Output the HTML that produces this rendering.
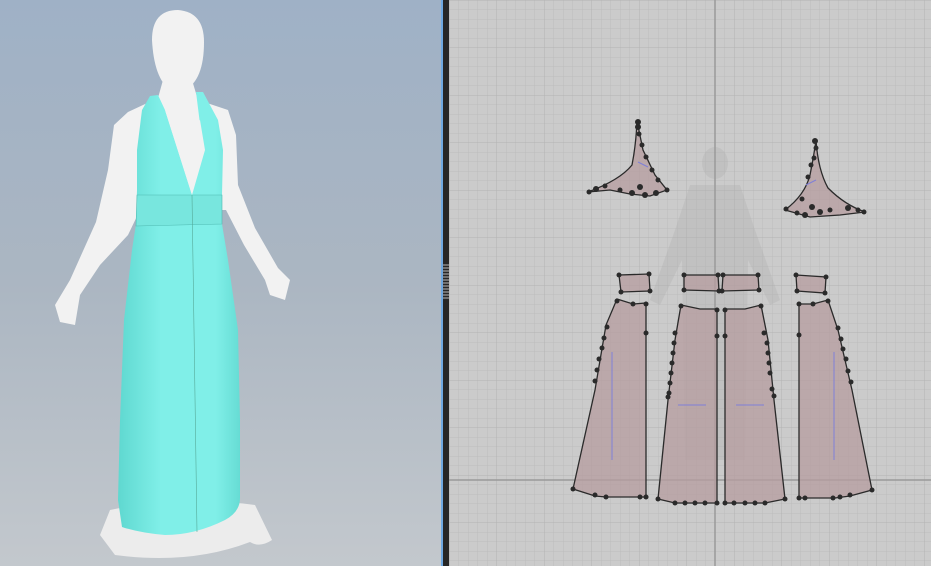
<!DOCTYPE html>
<html><head><style>
html,body{margin:0;padding:0;width:931px;height:566px;overflow:hidden;background:#c9c9c9}
</style></head><body>
<svg width="931" height="566" viewBox="0 0 931 566" xmlns="http://www.w3.org/2000/svg">
<defs>
<linearGradient id="bg" x1="0" y1="0" x2="0" y2="1">
<stop offset="0" stop-color="#9fb1c6"/><stop offset="0.5" stop-color="#abb6c2"/><stop offset="1" stop-color="#c3c8cd"/>
</linearGradient>
<linearGradient id="dr" x1="0" y1="0" x2="1" y2="0">
<stop offset="0" stop-color="#5fd8d0"/><stop offset="0.35" stop-color="#80efe8"/><stop offset="0.8" stop-color="#80efe8"/><stop offset="1" stop-color="#66dcd4"/>
</linearGradient>
<pattern id="g" width="9.5" height="9.5" patternUnits="userSpaceOnUse" x="449" y="0">
<path d="M0 0H9.5M0 0V9.5" stroke="#bcbcbc" stroke-width="1"/>
</pattern>
<pattern id="G" width="47.5" height="47.5" patternUnits="userSpaceOnUse" x="449" y="0">
<path d="M0 0H47.5M0 0V47.5" stroke="#b3b3b3" stroke-width="1"/>
</pattern>
</defs>
<rect x="0" y="0" width="441" height="566" fill="url(#bg)"/>
<!-- platform -->
<path d="M110 510 Q180 495 255 505 L272 540 Q260 548 250 542 Q190 565 115 555 L100 535Z" fill="#ececec"/>
<!-- body -->
<g fill="#f2f2f2">
<path d="M152 40 Q152 10 178 10 Q204 12 204 42 Q204 80 185 90 L170 90 Q154 78 152 40Z"/>
<path d="M163 80 L192 80 L198 100 L228 110 L236 135 L238 185 L255 228 L278 268 L290 280 L285 300 L270 295 L265 280 L244 245 L226 210 L140 210 L128 235 L100 265 L80 295 L75 325 L60 322 L55 305 L70 280 L96 222 L108 170 L114 125 L128 112 L158 98Z"/>
</g>
<path d="M158 95 L165 110 L192 195 L202 140 L196 92 L203 92 L218 120 L223 150 L222 195 L222 224 L228 260 L238 330 L240 420 L240 498 Q240 512 225 520 Q195 535 165 535 Q140 533 122 527 L118 500 L120 420 L124 320 L132 250 L136 224 L137 190 L137 150 L142 110 L150 96Z" fill="url(#dr)"/>
<path d="M137 195 L222 195 L222 224 L136 226Z" fill="#78e6de" stroke="#4fbab2" stroke-width="0.6"/>
<path d="M165 110 L192 195 L205 150 L200 120 L185 135 L175 130Z" fill="#f2f2f2"/>
<line x1="192" y1="195" x2="197" y2="532" stroke="#5a9" stroke-width="0.6"/>
<!-- divider -->
<rect x="441" y="0" width="2" height="566" fill="#6fa8e0"/>
<rect x="443" y="0" width="6" height="566" fill="#262626"/>
<g stroke="#bbb" stroke-width="1">
<path d="M443 265H449M443 268H449M443 271H449M443 274H449M443 277H449M443 280H449M443 283H449M443 286H449M443 289H449M443 292H449M443 295H449M443 298H449"/>
</g>
<!-- grid panel -->
<rect x="449" y="0" width="482" height="566" fill="#cbcbcb"/>
<rect x="449" y="0" width="482" height="566" fill="url(#g)"/>
<rect x="449" y="0" width="482" height="566" fill="url(#G)"/>
<!-- ghost avatar -->
<g fill="#b0b0b0" opacity="0.35">
<ellipse cx="715" cy="163" rx="13" ry="16"/>
<path d="M690 185 L740 185 L755 230 L780 300 L770 305 L748 260 L745 460 L685 460 L682 260 L660 305 L650 300 L675 230Z"/>
</g>
<line x1="715" y1="0" x2="715" y2="566" stroke="#9a9a9a" stroke-width="1.5"/>
<line x1="449" y1="480" x2="931" y2="480" stroke="#9a9a9a" stroke-width="1.5"/>
<!-- pieces -->
<g fill="#b59c9f" fill-opacity="0.75" stroke="#2a2a2a" stroke-width="1.3">
<path d="M637 121 L643 150 L655 175 L667 190 L650 196 L630 194 L610 190 L588 192 Q620 180 632 165 Q636 145 637 121Z"/>
<path d="M816 140 Q818 170 828 188 Q845 205 865 212 L840 215 L810 217 L785 210 Q805 195 810 175 Q814 155 816 140Z"/>
<path d="M619 275 L649 274 L650 291 L621 292Z"/>
<path d="M684 275 L718 275 L719 291 L684 290Z"/>
<path d="M723 275 L758 275 L759 290 L722 291Z"/>
<path d="M796 275 L826 277 L825 293 L797 291Z"/>
<path d="M617 299 L633 304 L646 303 L646 497 L606 497 L595 496 L573 489 L595 390 L606 325Z"/>
<path d="M681 305 L700 309 L717 309 L717 503 L695 503 L675 503 L658 499 L668 400 L675 340Z"/>
<path d="M725 309 L745 309 L761 305 L768 340 L774 400 L785 499 L765 503 L745 503 L725 503Z"/>
<path d="M799 304 L813 304 L828 300 L838 330 L852 390 L872 490 L850 496 L835 498 L799 498Z"/>
</g>
<g stroke="#7f7fd8" stroke-width="1">
<line x1="612" y1="352" x2="612" y2="460"/><line x1="834" y1="352" x2="834" y2="460"/>
<line x1="678" y1="405" x2="706" y2="405"/><line x1="736" y1="405" x2="764" y2="405"/>
<line x1="638" y1="162" x2="648" y2="167"/><line x1="806" y1="185" x2="816" y2="180"/>
</g>
<g fill="#2a2a2a">
<circle cx="638" cy="122" r="3"/><circle cx="638" cy="127" r="3"/><circle cx="639" cy="134" r="2.5"/><circle cx="642" cy="145" r="2.5"/><circle cx="646" cy="157" r="2.5"/><circle cx="652" cy="170" r="2.5"/><circle cx="658" cy="180" r="2.5"/><circle cx="667" cy="190" r="2.5"/><circle cx="656" cy="193" r="3"/><circle cx="645" cy="195" r="3"/><circle cx="640" cy="187" r="3"/><circle cx="632" cy="193" r="3"/><circle cx="620" cy="190" r="2.5"/><circle cx="605" cy="186" r="2.5"/><circle cx="596" cy="189" r="3"/><circle cx="589" cy="192" r="2.5"/>
<circle cx="815" cy="141" r="3"/><circle cx="816" cy="148" r="2.5"/><circle cx="814" cy="158" r="2.5"/><circle cx="811" cy="165" r="2.5"/><circle cx="808" cy="177" r="2.5"/><circle cx="802" cy="199" r="2.5"/><circle cx="786" cy="209" r="2.5"/><circle cx="797" cy="213" r="2.5"/><circle cx="805" cy="215" r="3"/><circle cx="812" cy="207" r="3"/><circle cx="820" cy="212" r="3"/><circle cx="830" cy="210" r="2.5"/><circle cx="848" cy="208" r="3"/><circle cx="858" cy="210" r="2.5"/><circle cx="864" cy="212" r="2.5"/>
<circle cx="619" cy="275" r="2.5"/><circle cx="649" cy="274" r="2.5"/><circle cx="650" cy="291" r="2.5"/><circle cx="621" cy="292" r="2.5"/>
<circle cx="684" cy="275" r="2.5"/><circle cx="718" cy="275" r="2.5"/><circle cx="719" cy="291" r="2.5"/><circle cx="684" cy="290" r="2.5"/>
<circle cx="723" cy="275" r="2.5"/><circle cx="758" cy="275" r="2.5"/><circle cx="759" cy="290" r="2.5"/><circle cx="722" cy="291" r="2.5"/>
<circle cx="796" cy="275" r="2.5"/><circle cx="826" cy="277" r="2.5"/><circle cx="825" cy="293" r="2.5"/><circle cx="797" cy="291" r="2.5"/>
<circle cx="617" cy="301" r="2.5"/><circle cx="633" cy="304" r="2.5"/><circle cx="646" cy="304" r="2.5"/><circle cx="646" cy="333" r="2.5"/><circle cx="607" cy="327" r="2.5"/><circle cx="604" cy="338" r="2.5"/><circle cx="602" cy="348" r="2.5"/><circle cx="599" cy="359" r="2.5"/><circle cx="597" cy="370" r="2.5"/><circle cx="595" cy="381" r="2.5"/><circle cx="573" cy="489" r="2.5"/><circle cx="595" cy="495" r="2.5"/><circle cx="606" cy="497" r="2.5"/><circle cx="640" cy="497" r="2.5"/><circle cx="646" cy="497" r="2.5"/>
<circle cx="681" cy="306" r="2.5"/><circle cx="717" cy="310" r="2.5"/><circle cx="717" cy="336" r="2.5"/><circle cx="675" cy="333" r="2.5"/><circle cx="674" cy="343" r="2.5"/><circle cx="673" cy="353" r="2.5"/><circle cx="672" cy="363" r="2.5"/><circle cx="671" cy="373" r="2.5"/><circle cx="670" cy="383" r="2.5"/><circle cx="669" cy="393" r="2.5"/><circle cx="668" cy="397" r="2.5"/><circle cx="658" cy="499" r="2.5"/><circle cx="675" cy="503" r="2.5"/><circle cx="685" cy="503" r="2.5"/><circle cx="695" cy="503" r="2.5"/><circle cx="705" cy="503" r="2.5"/><circle cx="717" cy="503" r="2.5"/>
<circle cx="725" cy="310" r="2.5"/><circle cx="761" cy="306" r="2.5"/><circle cx="725" cy="336" r="2.5"/><circle cx="764" cy="333" r="2.5"/><circle cx="767" cy="343" r="2.5"/><circle cx="768" cy="353" r="2.5"/><circle cx="769" cy="363" r="2.5"/><circle cx="770" cy="373" r="2.5"/><circle cx="772" cy="389" r="2.5"/><circle cx="774" cy="396" r="2.5"/><circle cx="785" cy="499" r="2.5"/><circle cx="765" cy="503" r="2.5"/><circle cx="755" cy="503" r="2.5"/><circle cx="745" cy="503" r="2.5"/><circle cx="734" cy="503" r="2.5"/><circle cx="725" cy="503" r="2.5"/>
<circle cx="799" cy="304" r="2.5"/><circle cx="813" cy="304" r="2.5"/><circle cx="828" cy="301" r="2.5"/><circle cx="799" cy="335" r="2.5"/><circle cx="838" cy="328" r="2.5"/><circle cx="841" cy="339" r="2.5"/><circle cx="843" cy="349" r="2.5"/><circle cx="846" cy="359" r="2.5"/><circle cx="848" cy="371" r="2.5"/><circle cx="851" cy="382" r="2.5"/><circle cx="872" cy="490" r="2.5"/><circle cx="850" cy="495" r="2.5"/><circle cx="840" cy="497" r="2.5"/><circle cx="833" cy="498" r="2.5"/><circle cx="805" cy="498" r="2.5"/><circle cx="799" cy="498" r="2.5"/>
</g>
</svg>
</body></html>
